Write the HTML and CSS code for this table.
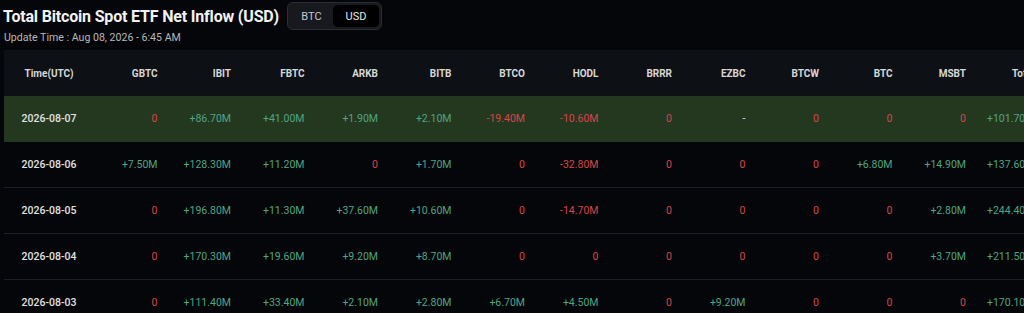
FILE: index.html
```html
<!DOCTYPE html>
<html>
<head>
<meta charset="utf-8">
<link rel="stylesheet" href="styles.css">
</head>
<body>
<div class="page">
  <div class="topbar">
    <h1 class="title">Total Bitcoin Spot ETF Net Inflow (USD)</h1>
    <div class="toggle">
      <span class="opt">BTC</span>
      <span class="opt active">USD</span>
    </div>
  </div>
  <div class="update">Update Time : Aug 08, 2026 - 6:45 AM</div>
  <div class="tablewrap">
    <table class="etf">
      <colgroup>
        <col class="c-time">
        <col class="c-num"><col class="c-num"><col class="c-num"><col class="c-num">
        <col class="c-num"><col class="c-num"><col class="c-num"><col class="c-num">
        <col class="c-num"><col class="c-num"><col class="c-num"><col class="c-num">
        <col class="c-total">
      </colgroup>
      <thead>
        <tr>
          <th class="time">Time(UTC)</th>
          <th>GBTC</th><th>IBIT</th><th>FBTC</th><th>ARKB</th><th>BITB</th><th>BTCO</th>
          <th>HODL</th><th>BRRR</th><th>EZBC</th><th>BTCW</th><th>BTC</th><th>MSBT</th><th class="total">Total</th>
        </tr>
      </thead>
      <tbody>
        <tr class="hl">
          <td class="time">2026-08-07</td>
          <td class="neg">0</td><td class="pos">+86.70M</td><td class="pos">+41.00M</td><td class="pos">+1.90M</td>
          <td class="pos">+2.10M</td><td class="neg">-19.40M</td><td class="neg">-10.60M</td><td class="neg">0</td>
          <td class="dash">-</td><td class="neg">0</td><td class="neg">0</td><td class="neg">0</td><td class="pos">+101.70M</td>
        </tr>
        <tr>
          <td class="time">2026-08-06</td>
          <td class="pos">+7.50M</td><td class="pos">+128.30M</td><td class="pos">+11.20M</td><td class="neg">0</td>
          <td class="pos">+1.70M</td><td class="neg">0</td><td class="neg">-32.80M</td><td class="neg">0</td>
          <td class="neg">0</td><td class="neg">0</td><td class="pos">+6.80M</td><td class="pos">+14.90M</td><td class="pos">+137.60M</td>
        </tr>
        <tr>
          <td class="time">2026-08-05</td>
          <td class="neg">0</td><td class="pos">+196.80M</td><td class="pos">+11.30M</td><td class="pos">+37.60M</td>
          <td class="pos">+10.60M</td><td class="neg">0</td><td class="neg">-14.70M</td><td class="neg">0</td>
          <td class="neg">0</td><td class="neg">0</td><td class="neg">0</td><td class="pos">+2.80M</td><td class="pos">+244.40M</td>
        </tr>
        <tr>
          <td class="time">2026-08-04</td>
          <td class="neg">0</td><td class="pos">+170.30M</td><td class="pos">+19.60M</td><td class="pos">+9.20M</td>
          <td class="pos">+8.70M</td><td class="neg">0</td><td class="neg">0</td><td class="neg">0</td>
          <td class="neg">0</td><td class="neg">0</td><td class="neg">0</td><td class="pos">+3.70M</td><td class="pos">+211.50M</td>
        </tr>
        <tr>
          <td class="time">2026-08-03</td>
          <td class="neg">0</td><td class="pos">+111.40M</td><td class="pos">+33.40M</td><td class="pos">+2.10M</td>
          <td class="pos">+2.80M</td><td class="pos">+6.70M</td><td class="pos">+4.50M</td><td class="neg">0</td>
          <td class="pos">+9.20M</td><td class="neg">0</td><td class="neg">0</td><td class="neg">0</td><td class="pos">+170.10M</td>
        </tr>
      </tbody>
    </table>
  </div>
</div>
</body>
</html>
```

FILE: styles.css
```css
html, body {
  margin: 0;
  padding: 0;
  background: #050609;
  overflow: hidden;
}
body {
  font-family: "Roboto", "Liberation Sans", sans-serif;
  color: #e8e8e8;
}
.page {
  padding: 2px 0 0 4px;
}
.topbar {
  display: flex;
  align-items: center;
  height: 28px;
  gap: 8px;
}
.title {
  margin: 0 0 0 -1px;
  font-size: 16px;
  font-weight: 700;
  color: #f2f2f2;
  letter-spacing: -0.18px;
  white-space: nowrap;
}
.toggle {
  display: flex;
  align-items: center;
  height: 28px;
  box-sizing: border-box;
  padding: 2px;
  background: #17191e;
  border: 1px solid #2a2d33;
  border-radius: 6px;
}
.opt {
  display: flex;
  align-items: center;
  justify-content: center;
  height: 22px;
  width: 43px;
  font-size: 11px;
  color: #c8c8c8;
  border-radius: 5px;
}
.opt.active {
  width: 46px;
  background: #000000;
  color: #e8e8e8;
}
.update {
  margin-top: 0;
  height: 16px;
  line-height: 16px;
  font-size: 10.6px;
  color: #b8b8b8;
}
.tablewrap {
  margin-top: 4px;
  width: 1100px;
}
.etf {
  border-collapse: collapse;
  table-layout: fixed;
  width: 1064px;
}
.c-time { width: 90px; }
.c-num { width: 73.5px; }
.c-total { width: 92px; }
.etf th {
  height: 46px;
  background: #0d1015;
  font-size: 10px;
  font-weight: 700;
  color: #d8d8d8;
  text-align: right;
  padding: 0 10px 0 0;
  white-space: nowrap;
}
.etf th.total {
  text-align: left;
  padding: 0 0 0 36px;
}
.etf td {
  height: 45px;
  font-size: 10.5px;
  text-align: right;
  padding: 0 10px 0 0;
  border-bottom: 1px solid #1c1f25;
  white-space: nowrap;
}
.etf td:last-child {
  text-align: left;
  padding: 0 0 0 11px;
}
.etf .time {
  text-align: center;
  padding: 0;
  color: #e2e2e2;
  font-weight: 500;
}
.etf th.time { font-weight: 700; color: #d8d8d8; }
.etf tr.hl td {
  background: #243820;
  border-bottom-color: #243820;
}
.pos { color: #4fa584; }
.neg { color: #d9454a; }
.dash { color: #e0e0e0; }
```
